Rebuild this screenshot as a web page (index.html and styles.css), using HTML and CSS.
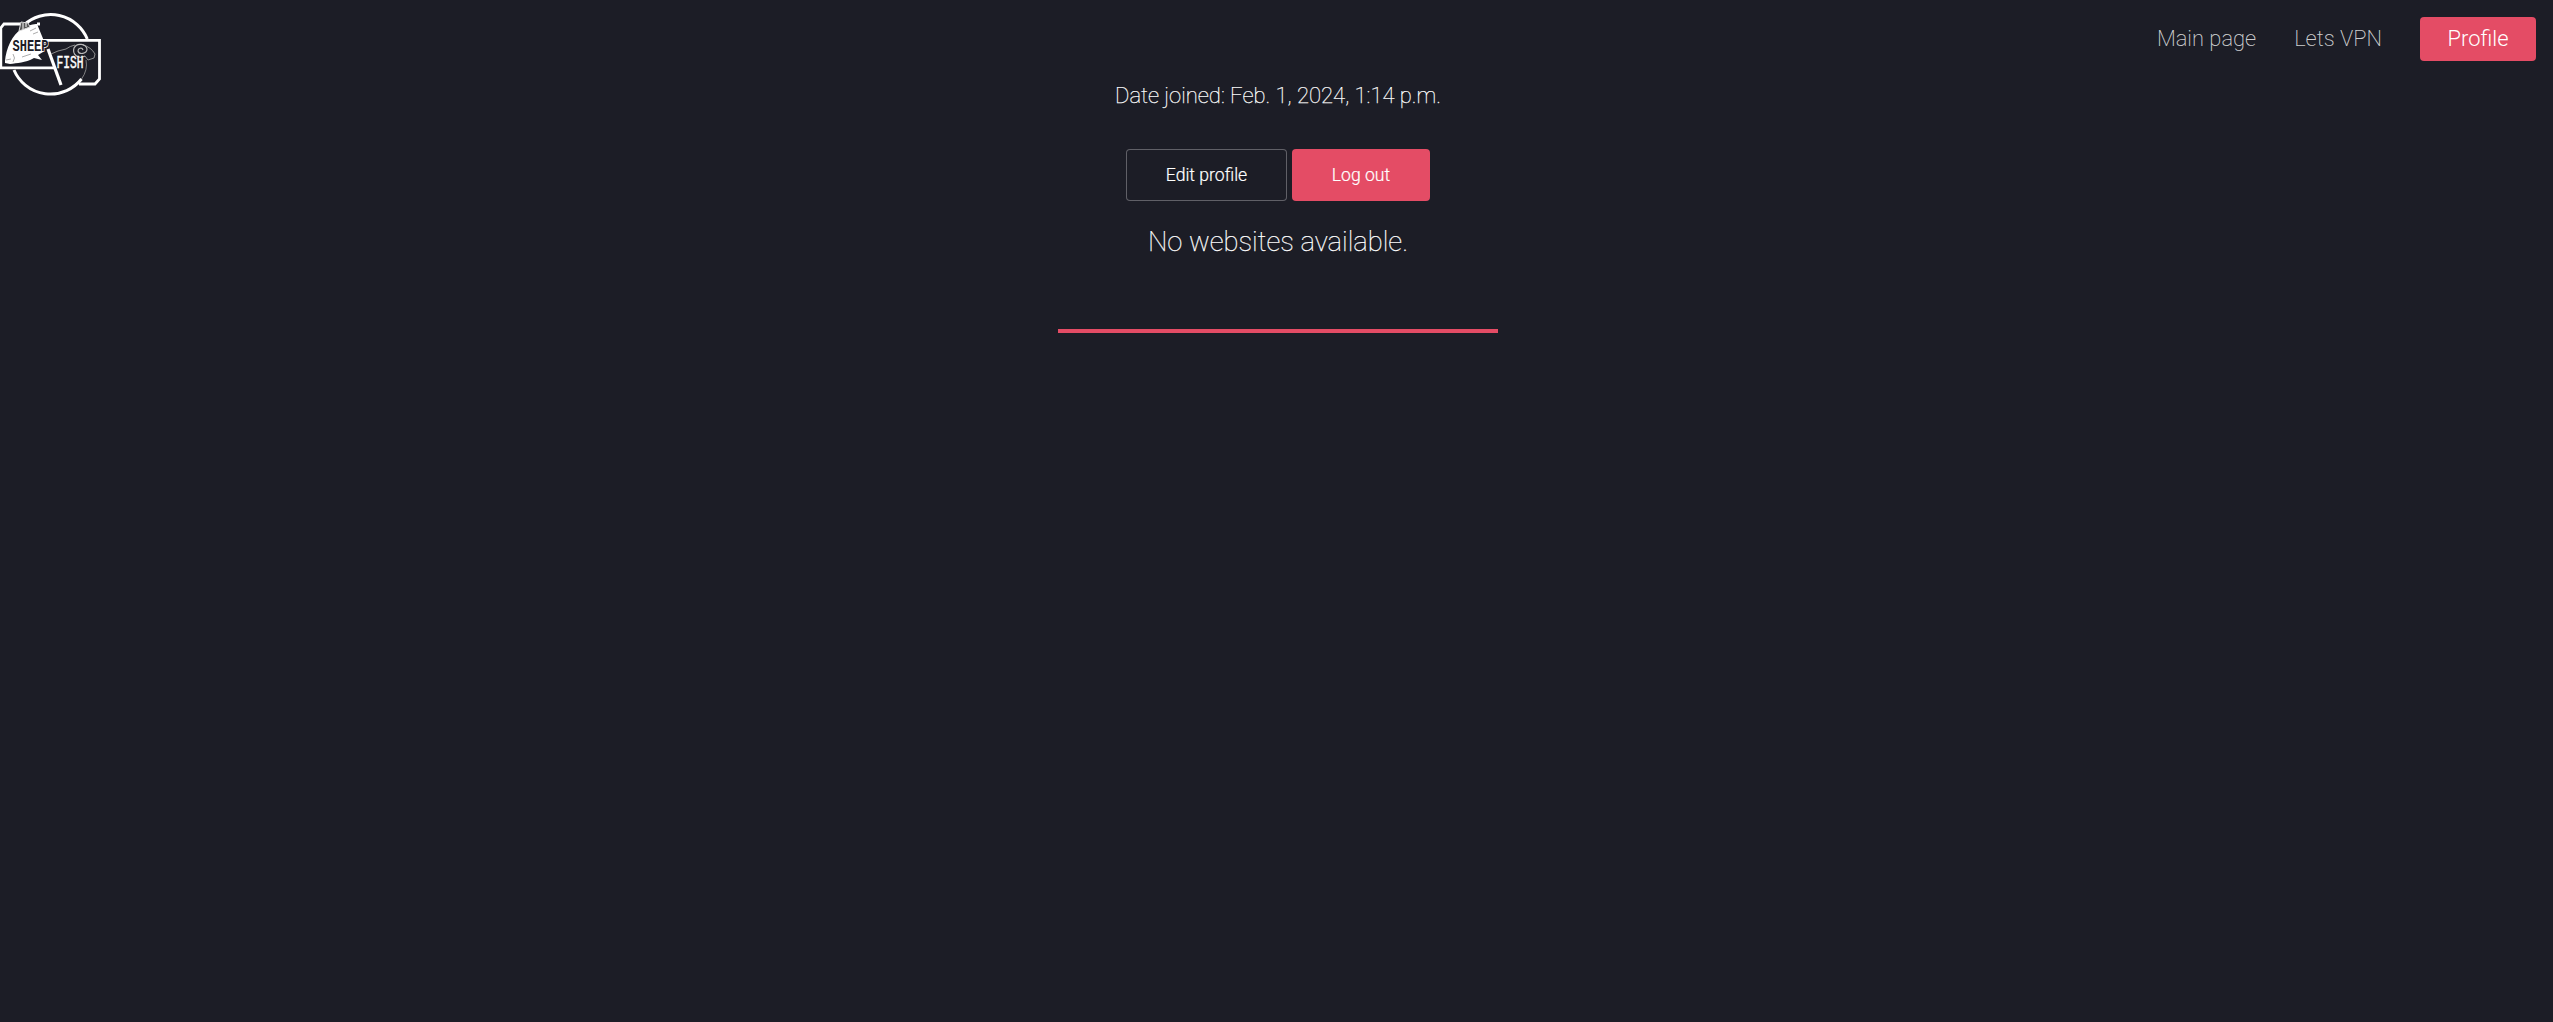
FILE: index.html
```html
<!DOCTYPE html>
<html lang="en">
<head>
<meta charset="utf-8">
<title>Profile</title>
<link rel="stylesheet" href="styles.css">
</head>
<body>
<header class="header">
  <a class="logo" href="#">
    <svg width="101" height="110" viewBox="0 0 101 110" fill="none" stroke="#fff">
      <path d="M14 70A39.6 39.6 0 0 0 81.5 79M87.3 39A39.6 39.6 0 0 0 24 25" stroke-width="3"/>
      <path d="M81.5 79Q88 70 86 60" stroke="#999" stroke-width=".8"/>
      <path d="M22 24H4L.8 28V67.8H54M40 24H37M41 40.3H99.5V79L95 84H79" stroke-width="2.8"/>
      <path d="M48 49L61 85" stroke-width="3.2"/>
      <path d="M5 61C6 49 12 34 22 29C28 25 34 24 37 24L44 41L43 52L38 55L42 60L34 58C25 63 17 63 10 64L5 63Z" fill="#fff" stroke="none"/>
      <path d="M19 31L21 22L28 23L30 27Z" fill="#555" stroke="#ddd" stroke-width="1"/>
      <path d="M23 29V23M26 27V23" stroke-width="1"/>
      <path d="M6 60L11 59M13 54Q16 58 13 62M22 57L31 54M30 31L36 28M33 34L38 32" stroke="#888" stroke-width=".7"/>
      <path d="M51 54L58 51L66 49Q70 46 75 45M83 45Q91 47 95 54L94 58L88 60L85 56" stroke="#999" stroke-width=".9"/>
      <path d="M85 56C78 60 72 54 74 48C77 42 86 44 87 49C87 54 79 55 78 51C78 48 82 47 83 50" stroke="#bbb" stroke-width="1.2"/>
      <text class="logo-word logo-halo" x="12.5" y="51" textLength="36" lengthAdjust="spacingAndGlyphs">SHEEP</text>
      <text class="logo-word logo-light" x="56.5" y="67.7" textLength="27" lengthAdjust="spacingAndGlyphs">FISH</text>
    </svg>
  </a>
  <nav class="nav">
    <a class="nav-link" href="#">Main page</a>
    <a class="nav-link" href="#">Lets VPN</a>
    <a class="nav-link nav-button" href="#">Profile</a>
  </nav>
</header>
<main class="profile">
  <p class="joined">Date joined: Feb. 1, 2024, 1:14 p.m.</p>
  <div class="actions">
    <a class="button button-outline" href="#">Edit profile</a>
    <a class="button button-primary" href="#">Log out</a>
  </div>
  <p class="empty">No websites available.</p>
  <hr class="divider">
</main>
</body>
</html>
```
FILE: styles.css
```css
* { box-sizing: border-box; }
body {
  margin: 0;
  min-height: 100vh;
  background: #1c1d26;
  color: #fff;
  font-family: Roboto, sans-serif;
  font-weight: 100;
}
a { color: inherit; text-decoration: none; }
.header {
  display: flex;
  justify-content: space-between;
  align-items: flex-start;
  height: 78px;
  padding-right: 17px;
}
.logo, .logo svg { display: block; }
.logo-word {
  font-family: "Liberation Mono", monospace;
  font-weight: 400;
}
.logo-halo {
  font-size: 17px;
  font-weight: 700;
  fill: #1c1d26;
  stroke: #fff;
  stroke-width: 1.5px;
  paint-order: stroke;
}
.logo-light { font-size: 18px; fill: #fff; stroke: #fff; stroke-width: .5px; }
.nav { display: flex; align-items: center; gap: 38px; padding-top: 17px; }
.nav-link {
  color: rgba(255, 255, 255, .8);
  font-size: 21.9px;
  font-weight: 200;
  line-height: 44px;
}
.nav-button {
  width: 116px;
  border-radius: 4px;
  background: #e44c65;
  color: #fff;
  font-weight: 300;
  text-align: center;
}
.profile {
  display: flex;
  flex-direction: column;
  align-items: center;
  padding-left: 3px;
}
.joined {
  margin: 0;
  font-size: 22px;
  line-height: 36px;
  -webkit-text-stroke: .25px #fff;
}
.actions { display: flex; gap: 5px; margin-top: 35px; }
.button {
  height: 52px;
  border-radius: 4px;
  font-size: 17.6px;
  font-weight: 300;
  line-height: 52px;
  text-align: center;
  -webkit-text-stroke: .2px #fff;
}
.button-outline { width: 161px; box-shadow: inset 0 0 0 1px #606067; }
.button-primary { width: 138px; background: #e44c65; }
.empty {
  margin: 21px 0 0;
  font-size: 27.4px;
  line-height: 40px;
  -webkit-text-stroke: .25px #fff;
}
.divider { width: 440px; height: 4px; margin: 67px 0 0; border: 0; background: #e44c65; }
```
